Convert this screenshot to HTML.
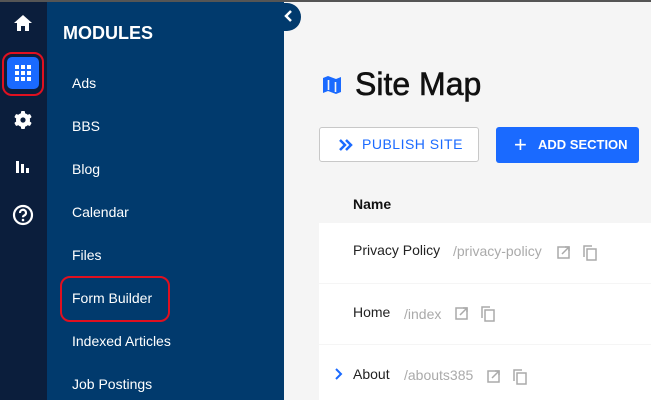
<!DOCTYPE html><html><head><style>
*{margin:0;padding:0;box-sizing:border-box}
body{width:651px;height:400px;overflow:hidden;background:#f5f5f5;font-family:"Liberation Sans",sans-serif;position:relative}
.rail{position:absolute;left:0;top:0;width:47px;height:400px;background:#0b1e3c}
.panel{position:absolute;left:47px;top:0;width:237px;height:400px;background:#013a6d;color:#fff}
.panel .h{position:absolute;left:16px;top:23px;font-weight:bold;font-size:18px}
.panel .it{position:absolute;left:25px;font-size:14px}
.abs{position:absolute}
.row{position:absolute;left:319px;width:332px;background:#fff;font-size:14px;color:#222}
.row span{position:absolute;top:0}
.g{color:#aaa}
</style></head><body>
<div class="rail">
<svg class="abs" style="left:13px;top:14px" width="20" height="18" viewBox="0 0 20 18"><path d="M10 1L1 9h3v8h4v-5h4v5h4V9h3z" fill="#fff"/></svg>
<div class="abs" style="left:2px;top:52px;width:42px;height:44px;border:2px solid #e01020;border-radius:10px"></div>
<div class="abs" style="left:7px;top:57px;width:32px;height:32px;background:#1a6aff;border-radius:5px"></div>
<svg class="abs" style="left:15px;top:65px" width="16" height="16" viewBox="0 0 16 16" fill="#fff"><rect x="0" y="0" width="4" height="4"/><rect x="6" y="0" width="4" height="4"/><rect x="12" y="0" width="4" height="4"/><rect x="0" y="6" width="4" height="4"/><rect x="6" y="6" width="4" height="4"/><rect x="12" y="6" width="4" height="4"/><rect x="0" y="12" width="4" height="4"/><rect x="6" y="12" width="4" height="4"/><rect x="12" y="12" width="4" height="4"/></svg>
<svg class="abs" style="left:13px;top:110px" width="20" height="20" viewBox="0 0 20 20"><g fill="#fff"><circle cx="10" cy="10" r="7"/><rect x="8" y="1" width="4" height="18" rx="1"/><rect x="8" y="1" width="4" height="18" rx="1" transform="rotate(60 10 10)"/><rect x="8" y="1" width="4" height="18" rx="1" transform="rotate(120 10 10)"/></g><circle cx="10" cy="10" r="2.6" fill="#0b1e3c"/></svg>
<svg class="abs" style="left:15px;top:158px" width="16" height="16" viewBox="0 0 16 16" fill="#fff"><rect x="1" y="3" width="3" height="12"/><rect x="6" y="6" width="3" height="9"/><rect x="11" y="10" width="3" height="5"/></svg>
<svg class="abs" style="left:12px;top:204px" width="22" height="22" viewBox="0 0 22 22"><circle cx="11" cy="11" r="9" fill="none" stroke="#fff" stroke-width="2.2"/><path d="M8 9a3 3 0 1 1 4 2.6c-.8.4-1 .9-1 1.7" fill="none" stroke="#fff" stroke-width="2.2"/><circle cx="11" cy="16" r="1.3" fill="#fff"/></svg>
</div>
<div class="panel">
<div class="h">MODULES</div>
<div class="it" style="top:75px">Ads</div>
<div class="it" style="top:118px">BBS</div>
<div class="it" style="top:161px">Blog</div>
<div class="it" style="top:204px">Calendar</div>
<div class="it" style="top:247px">Files</div>
<div class="it" style="top:290px">Form Builder</div>
<div class="abs" style="left:13px;top:276px;width:110px;height:46px;border:2px solid #e01020;border-radius:10px"></div>
<div class="it" style="top:333px">Indexed Articles</div>
<div class="it" style="top:376px">Job Postings</div>
</div>
<div style="position:absolute;left:0;top:0;width:651px;height:2px;background:#555"></div>
<div class="abs" style="left:276px;top:3px;width:25px;height:28px;background:#013a6d;border-radius:0 14px 14px 0"></div>
<svg class="abs" style="left:283px;top:9px" width="12" height="14" viewBox="0 0 12 14"><path d="M8 2L3 7l5 5" fill="none" stroke="#fff" stroke-width="2.5"/></svg>
<svg class="abs" style="left:321px;top:74px" width="22" height="22" viewBox="0 0 22 22"><path d="M2 4l5-2 8 3 5-2v15l-5 2-8-3-5 2z" fill="#1a6aff"/><path d="M7.5 6v10M14.5 8v10" stroke="#f5f5f5" stroke-width="1.6"/></svg>
<div class="abs" style="left:355px;top:66px;font-size:32px;color:#111;-webkit-text-stroke:.6px #111">Site Map</div>
<div class="abs" style="left:319px;top:127px;width:160px;height:35px;background:#fff;border:1px solid #c8c8c8;border-radius:3px;color:#1a6aff;font-size:14px;letter-spacing:.5px;line-height:33px;padding-left:42px">PUBLISH SITE</div>
<svg class="abs" style="left:338px;top:138px" width="16" height="14" viewBox="0 0 16 14"><path d="M2 2l5 5-5 5M8 2l5 5-5 5" fill="none" stroke="#1a6aff" stroke-width="2.5"/></svg>
<div class="abs" style="left:496px;top:127px;width:143px;height:36px;background:#1a6aff;border-radius:3px;color:#fff;font-size:13px;font-weight:bold;line-height:36px;padding-left:42px">ADD SECTION</div>
<div class="abs" style="left:514px;top:134px;color:#fff;font-size:22px;line-height:22px">+</div>
<div class="abs" style="left:353px;top:196px;font-size:14px;font-weight:bold;color:#111">Name</div>
<div class="row" style="top:223px;height:60px"><span style="left:34px;top:19px">Privacy Policy</span><span class="g" style="left:134px;top:20px">/privacy-policy</span></div>
<div class="row" style="top:284px;height:60px"><span style="left:34px;top:20px">Home</span><span class="g" style="left:85px;top:22px">/index</span></div>
<div class="row" style="top:345px;height:55px"><span style="left:34px;top:21px">About</span><span class="g" style="left:85px;top:22px">/abouts385</span></div>
<svg class="abs" style="left:333px;top:367px" width="10" height="14" viewBox="0 0 10 14"><path d="M3 2l5 5-5 5" fill="none" stroke="#1a6aff" stroke-width="2"/></svg>
<svg class="abs" style="left:557px;top:245px" width="40" height="16" viewBox="0 0 40 16" fill="none" stroke="#aaa" stroke-width="1.5"><rect x="1" y="2" width="11" height="11"/><path d="M5 9l7-7M8 2h4v4"/><rect x="30" y="4" width="9" height="11"/><path d="M27 12V1h8"/></svg>
<svg class="abs" style="left:455px;top:306px" width="40" height="16" viewBox="0 0 40 16" fill="none" stroke="#aaa" stroke-width="1.5"><rect x="1" y="2" width="11" height="11"/><path d="M5 9l7-7M8 2h4v4"/><rect x="30" y="4" width="9" height="11"/><path d="M27 12V1h8"/></svg>
<svg class="abs" style="left:487px;top:369px" width="40" height="16" viewBox="0 0 40 16" fill="none" stroke="#aaa" stroke-width="1.5"><rect x="1" y="2" width="11" height="11"/><path d="M5 9l7-7M8 2h4v4"/><rect x="30" y="4" width="9" height="11"/><path d="M27 12V1h8"/></svg>
</body></html>
